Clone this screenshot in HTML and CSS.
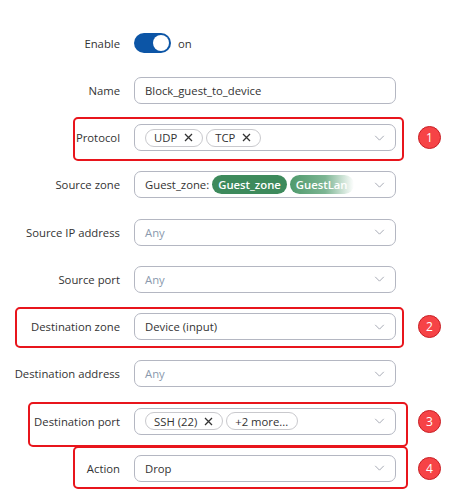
FILE: index.html
```html
<!DOCTYPE html>
<html lang="en">
<head>
<meta charset="UTF-8" />
<title>Traffic rule</title>
<link rel="stylesheet" href="styles.css">
</head>
<body>
  <div class="form">
    <div class="row">
      <div class="label">Enable</div>
      <div class="switch-wrap">
        <span class="switch"><span class="knob"></span></span>
        <span class="switch-text">on</span>
      </div>
    </div>

    <div class="row">
      <div class="label">Name</div>
      <div class="field"><span class="value">Block_guest_to_device</span></div>
    </div>

    <!-- Protocol (1) -->
    <div class="row">
      <div class="mark mark-protocol"></div>
      <div class="label">Protocol</div>
      <div class="field">
        <span class="chip">UDP <svg class="x" viewBox="0 0 9 9"><path d="M1 1l7 7M8 1l-7 7" /></svg></span>
        <span class="chip">TCP <svg class="x" viewBox="0 0 9 9"><path d="M1 1l7 7M8 1l-7 7" /></svg></span>
        <svg class="chevron" viewBox="0 0 12 7"><path d="M1 1l5 5 5-5" /></svg>
      </div>
      <div class="badge">1</div>
    </div>

    <div class="row">
      <div class="label">Source zone</div>
      <div class="field">
        <span class="value">Guest_zone:</span>
        <span class="zone">Guest_zone</span>
        <span class="zone zone-fade">GuestLan</span>
        <svg class="chevron" viewBox="0 0 12 7"><path d="M1 1l5 5 5-5" /></svg>
      </div>
    </div>

    <div class="row">
      <div class="label">Source IP address</div>
      <div class="field">
        <span class="placeholder">Any</span>
        <svg class="chevron" viewBox="0 0 12 7"><path d="M1 1l5 5 5-5" /></svg>
      </div>
    </div>

    <div class="row">
      <div class="label">Source port</div>
      <div class="field">
        <span class="placeholder">Any</span>
        <svg class="chevron" viewBox="0 0 12 7"><path d="M1 1l5 5 5-5" /></svg>
      </div>
    </div>

    <!-- Destination zone (2) -->
    <div class="row">
      <div class="mark mark-dzone"></div>
      <div class="label">Destination zone</div>
      <div class="field">
        <span class="value">Device (input)</span>
        <svg class="chevron" viewBox="0 0 12 7"><path d="M1 1l5 5 5-5" /></svg>
      </div>
      <div class="badge">2</div>
    </div>

    <div class="row">
      <div class="label">Destination address</div>
      <div class="field">
        <span class="placeholder">Any</span>
        <svg class="chevron" viewBox="0 0 12 7"><path d="M1 1l5 5 5-5" /></svg>
      </div>
    </div>

    <!-- Destination port (3) -->
    <div class="row">
      <div class="mark mark-dport"></div>
      <div class="label">Destination port</div>
      <div class="field">
        <span class="chip">SSH (22) <svg class="x" viewBox="0 0 9 9"><path d="M1 1l7 7M8 1l-7 7" /></svg></span>
        <span class="chip">+2 more...</span>
        <svg class="chevron" viewBox="0 0 12 7"><path d="M1 1l5 5 5-5" /></svg>
      </div>
      <div class="badge">3</div>
    </div>

    <!-- Action (4) -->
    <div class="row">
      <div class="mark mark-action"></div>
      <div class="label">Action</div>
      <div class="field">
        <span class="value">Drop</span>
        <svg class="chevron" viewBox="0 0 12 7"><path d="M1 1l5 5 5-5" /></svg>
      </div>
      <div class="badge">4</div>
    </div>
  </div>
</body>
</html>
```

FILE: styles.css
```css
body {
  margin: 0;
  background: #fff;
  font-family: "Open Sans", "Noto Sans", sans-serif;
  font-size: 11.3px;
  color: #333;
}

.form {
  padding-top: 19.5px;
}

.row {
  position: relative;
  display: flex;
  align-items: center;
  height: 47.25px;
}

.label {
  width: 120px;
  text-align: right;
  margin-right: 14px;
  white-space: nowrap;
}

/* toggle switch */
.switch-wrap {
  display: flex;
  align-items: center;
}
.switch {
  position: relative;
  width: 37px;
  height: 20px;
  border-radius: 10px;
  background: #0c55a6;
}
.switch .knob {
  position: absolute;
  right: 2px;
  top: 2px;
  width: 16px;
  height: 16px;
  border-radius: 50%;
  background: #fff;
}
.switch-text {
  margin-left: 7px;
}

/* select-like field */
.field {
  box-sizing: border-box;
  width: 262px;
  height: 27px;
  border: 1px solid #b4b7c2;
  border-radius: 7px;
  padding: 0 10px;
  display: flex;
  align-items: center;
  gap: 3px;
}
.value {
  white-space: nowrap;
}
.placeholder {
  color: #8a99ad;
}
.chevron {
  margin-left: auto;
  width: 11px;
  height: 6px;
  fill: none;
  stroke: #a2a6b0;
  stroke-width: 1.1;
}

.chip {
  box-sizing: border-box;
  display: flex;
  align-items: center;
  height: 18px;
  padding: 0 9px 0 8px;
  border: 1px solid #c9c9cd;
  border-radius: 9px;
  white-space: nowrap;
}
.chip .x {
  width: 9px;
  height: 9px;
  margin-left: 7px;
  fill: none;
  stroke: #333;
  stroke-width: 1.3;
}

.zone {
  height: 19px;
  line-height: 19px;
  padding: 0 6px;
  border-radius: 10px;
  background: #3d8a5c;
  color: #fff;
  font-weight: 600;
  white-space: nowrap;
}
.zone-fade {
  background: linear-gradient(90deg, #4f9a6c 0%, #7cb593 55%, rgba(255,255,255,0) 100%);
}

/* numbered callouts */
.badge {
  box-sizing: border-box;
  width: 23px;
  height: 23px;
  margin-left: 22px;
  border-radius: 50%;
  background: #f64346;
  border: 1px solid #c81e24;
  color: #fff;
  font-size: 12px;
  text-align: center;
  line-height: 21px;
}

/* red highlight frames laid over the rows */
.mark {
  position: absolute;
  box-sizing: border-box;
  border: 2px solid #e8151c;
  border-radius: 5px;
}
.mark-protocol {
  left: 73px;
  width: 331px;
  top: 3px;
  height: 44px;
}
.mark-dzone {
  left: 15px;
  width: 389px;
  top: 4px;
  height: 41px;
}
.mark-dport {
  left: 28px;
  width: 380px;
  top: 4px;
  height: 45px;
}
.mark-action {
  left: 73px;
  width: 335px;
  top: 1px;
  height: 43px;
}
```
